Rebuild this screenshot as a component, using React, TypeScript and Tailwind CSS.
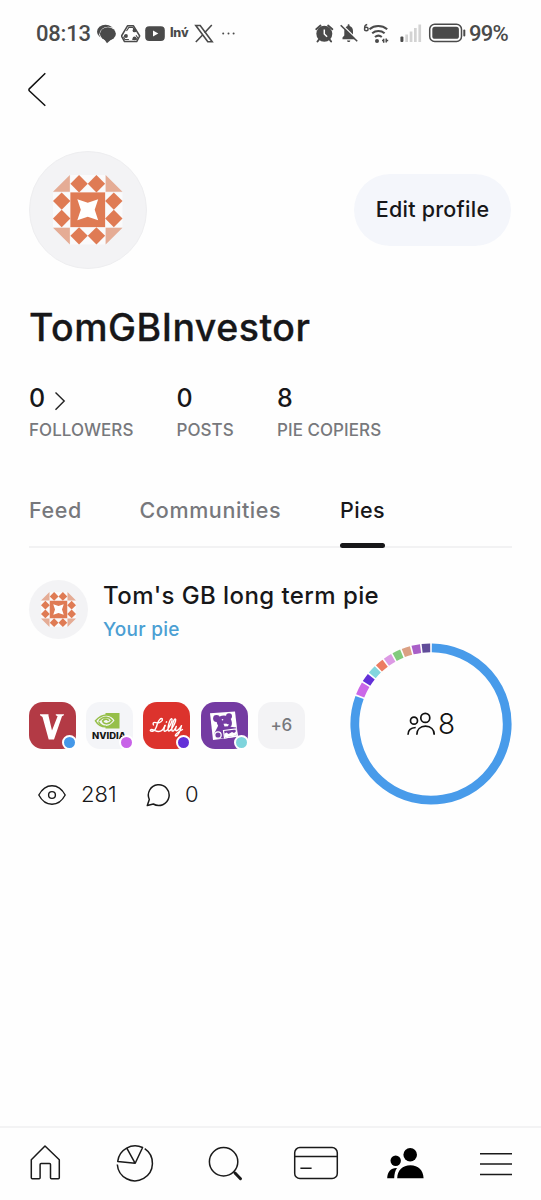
import React from "react";

const ORANGE = "#df7b54";
const PALE = "#e5ac95";

function Identicon({ className }: { className: string }) {
  const diamonds = [
    [1.5, 0.5], [2.5, 0.5], [0.5, 1.5], [0.5, 2.5],
    [3.5, 1.5], [3.5, 2.5], [1.5, 3.5], [2.5, 3.5],
  ];
  return (
    <svg viewBox="0 0 4 4" className={className}>
      <path d="M1 0h2v1h1v2h-1v1h-2v-1h-1v-2h1z" fill="#fafafb" />
      <path d="M0 .97L.97 0V.97zM3.03 0L4 .97H3.03zM0 3.03H.97V4zM3.03 3.03H4L3.03 4z" fill={PALE} />
      {diamonds.map(([x, y]) => (
        <path key={`${x}-${y}`} d={`M${x} ${y - 0.5}l.5 .5l-.5 .5l-.5 -.5z`} fill={ORANGE} />
      ))}
      <rect x="1" y="1" width="2" height="2" fill={ORANGE} />
      <path d="M1.4 1.4L2 1.6L2.6 1.4L2.4 2L2.6 2.6L2 2.4L1.4 2.6L1.6 2z" fill="#fff" />
    </svg>
  );
}

function StatusBar() {
  return (
    <div className="flex h-[66px] shrink-0 items-center pl-9 pr-[32px] font-[Roboto,sans-serif] text-[#4a4a4a]">
      <span className="w-[55px] pt-px text-[22px] font-medium leading-none tracking-[-0.2px]">08:13</span>
      <svg viewBox="97 23 20 21" className="ml-[6px] h-[21px] w-5">
        <ellipse cx="105.500" cy="31.800" rx="8.500" ry="7" fill="#4a4a4a" />
        <ellipse cx="108.300" cy="34.200" rx="9" ry="7.500" fill="#fff" />
        <ellipse cx="107.900" cy="33.800" rx="8" ry="6.600" fill="#4a4a4a" />
        <path d="M104 39l3 4.300 5.500-5z" fill="#4a4a4a" />
      </svg>
      <svg viewBox="121 23 20 21" className="ml-1 h-[21px] w-5">
        <path d="M127.500 25.800h6l6.200 10.200-3 5.600h-12.200l-3-5.600z" fill="none" stroke="#4a4a4a" strokeWidth="1.500" strokeLinejoin="round" />
        <path d="M126.500 31l2.400-3.600h4L135 31M125 35.200l-1.300 2.300 1.200 2h4M136 35.200l1.500 2.300-1.200 2h-4" fill="none" stroke="#4a4a4a" strokeWidth="1.100" />
        <circle cx="134.500" cy="30.400" r="1.900" fill="#4a4a4a" />
        <circle cx="126" cy="36" r="1.900" fill="#4a4a4a" />
        <circle cx="134.500" cy="38.300" r="1.900" fill="#4a4a4a" />
      </svg>
      <svg viewBox="145 23 20 21" className="ml-1 h-[21px] w-5">
        <rect x="145.200" y="26.200" width="19.600" height="14.800" rx="4" fill="#4a4a4a" />
        <path d="M153 30.600l5.300 3-5.300 3z" fill="#fff" />
      </svg>
      <span className="ml-[5px] w-[19px] whitespace-nowrap font-[Inter,sans-serif] text-[12.5px] font-extrabold leading-none tracking-[-0.2px]">Inv́</span>
      <svg viewBox="194 23 20 21" className="ml-[5px] h-[21px] w-5">
        <path d="M195.800 25.500h4.400l12 16.200h-4.400z" fill="none" stroke="#4a4a4a" strokeWidth="1.600" />
        <path d="M211.800 25l-7.200 7.700M202.800 34.800l-7 7.200" stroke="#4a4a4a" strokeWidth="1.600" />
      </svg>
      <svg viewBox="221 23 15 21" className="ml-[7px] h-[21px] w-[15px]" fill="#4a4a4a">
        <circle cx="223.200" cy="33.500" r="1" /><circle cx="228.500" cy="33.500" r="1" /><circle cx="233.600" cy="33.500" r="1" />
      </svg>
      <div className="flex-1" />
      <svg viewBox="314 23 20 21" className="h-[21px] w-5">
        <circle cx="324.300" cy="33.800" r="8" fill="#4a4a4a" />
        <path d="M316.200 29.200l4.300-3.700M332.400 29.200l-4.300-3.700" stroke="#4a4a4a" strokeWidth="1.800" strokeLinecap="round" />
        <path d="M319 39.500l-1.500 2M329.600 39.500l1.500 2" stroke="#4a4a4a" strokeWidth="2" strokeLinecap="round" />
        <path d="M324.300 29.500v4.500l2.800 2.800" fill="none" stroke="#fff" strokeWidth="1.500" />
      </svg>
      <svg viewBox="339 23 20 21" className="ml-[5px] h-[21px] w-5">
        <path d="M342.500 39.200v-1.600l1.800-2v-4.500c0-2.600 1.200-4.400 3.300-5v-.7c0-1.400 2-1.400 2 0v.7c2.200.6 3.400 2.400 3.400 5v4.500l1.800 2v1.600zM347 40.500h3.300c-.2 2-3 2-3.300 0z" fill="#4a4a4a" />
        <path d="M341.800 24.500l16.400 16" stroke="#fff" strokeWidth="1.400" />
        <path d="M340.700 25.300l16.500 16" stroke="#4a4a4a" strokeWidth="1.600" />
      </svg>
      <svg viewBox="363 21 27 23" className="ml-1 h-[23px] w-[27px]">
        <path d="M367.200 23.500c-2 .2-2.600 2-2.600 3.500" fill="none" stroke="#4a4a4a" strokeWidth="1.400" />
        <circle cx="366.300" cy="28" r="1.800" fill="none" stroke="#4a4a4a" strokeWidth="1.400" />
        <path d="M369.500 28.200c5-4.200 12.500-4.200 17.700 0M372.200 32.200c3.600-3 8.800-3 12.400 0M375 36c2-1.600 4.800-1.600 6.800 0" fill="none" stroke="#4a4a4a" strokeWidth="2.100" />
        <circle cx="377" cy="40" r="2" fill="#4a4a4a" />
        <path d="M383.700 37.800v4M386.200 37.400v4M382 39.600h1.700M386.200 39.600h2" stroke="#4a4a4a" strokeWidth="1.500" />
      </svg>
      <svg viewBox="400 23 22 21" className="ml-[10px] h-[21px] w-[22px]">
        <rect x="400.400" y="36.500" width="3" height="5.500" rx="1" fill="#4a4a4a" />
        <path d="M405.300 34.500h2.700v7.500h-2.700zM409.700 31.500h2.700v10.500h-2.700zM414 28h2.700v14h-2.700zM418.400 24.500h2.700v17.500h-2.700z" fill="#d3d3d3" />
      </svg>
      <svg viewBox="428 22 38 22" className="ml-[6px] h-[22px] w-[38px]">
        <rect x="429.700" y="24.200" width="31.800" height="17.200" rx="5" fill="none" stroke="#4a4a4a" strokeWidth="1.500" />
        <rect x="432.300" y="26.800" width="26.600" height="12" rx="2.600" fill="#4a4a4a" />
        <path d="M464.300 30.500v5" stroke="#4a4a4a" strokeWidth="2" strokeLinecap="round" />
      </svg>
      <span className="ml-[3px] w-10 whitespace-nowrap pt-px text-[22px] font-medium leading-none tracking-[-0.8px]">99%</span>
    </div>
  );
}

function Stat({ value, label, className, arrow }: { value: string; label: string; className: string; arrow?: boolean }) {
  return (
    <div className={className}>
      <div className="flex h-[30px] items-center text-[25px] font-medium leading-[30px] text-[#171719]">
        {value}
        {arrow && (
          <svg viewBox="0 0 12 20" className="ml-[9px] mt-[6px] h-5 w-3" fill="none" stroke="#222" strokeWidth="1.400">
            <path d="M1.500 1.500L10.200 10L1.500 18.800" />
          </svg>
        )}
      </div>
      <div className="mt-[7px] whitespace-nowrap text-[17px] font-medium leading-5 tracking-[0.05px] text-[#77787c]">{label}</div>
    </div>
  );
}

const slices = [
  { from: 0, to: 291, color: "#489bea" },
  { from: 291, to: 301.6, color: "#cb68e8" },
  { from: 301.6, to: 309, color: "#6330d8" },
  { from: 309, to: 316.3, color: "#82d5de" },
  { from: 316.3, to: 323.6, color: "#ec7c62" },
  { from: 323.6, to: 330.9, color: "#dc9ae4" },
  { from: 330.9, to: 338.1, color: "#82ca7d" },
  { from: 338.1, to: 345.4, color: "#dba083" },
  { from: 345.4, to: 352.7, color: "#a95fc8" },
  { from: 352.7, to: 360, color: "#604c99" },
];

function arc(from: number, to: number) {
  const r = 76.2;
  const point = (deg: number) => {
    const a = ((deg - 90) * Math.PI) / 180;
    return `${81 + r * Math.cos(a)} ${81 + r * Math.sin(a)}`;
  };
  return `M${point(from + 0.6)}A${r} ${r} 0 ${to - from > 180 ? 1 : 0} 1 ${point(to - 0.6)}`;
}

function PieRing() {
  return (
    <div className="grid size-[162px] shrink-0 place-items-center">
      <svg viewBox="0 0 162 162" className="col-start-1 row-start-1 size-[162px]" fill="none" strokeWidth="8.800">
        {slices.map((s) => (
          <path key={s.from} d={arc(s.from, s.to)} stroke={s.color} />
        ))}
      </svg>
      <div className="col-start-1 row-start-1 flex items-center gap-[3px]">
        <svg viewBox="0 0 28 24" className="h-6 w-7" fill="none" stroke="#111" strokeWidth="1.700">
          <circle cx="7" cy="8.700" r="3.500" />
          <circle cx="18.300" cy="5.900" r="4.500" />
          <path d="M1 22.700c0-4.500 3-7 7.700-7.200M9.800 22.700c0-5.200 3.500-8.500 8.700-8.500s8.700 3.300 8.700 8.500" />
        </svg>
        <span className="text-[28px] font-light leading-8 text-[#111]">8</span>
      </div>
    </div>
  );
}

function Tile({ bg, dot, children }: { bg: string; dot: string; children: React.ReactNode }) {
  return (
    <div className={`relative size-[47px] rounded-[14px] ${bg}`}>
      {children}
      <span className={`absolute -right-px -bottom-px size-[15px] rounded-full border-2 border-white ${dot}`} />
    </div>
  );
}

function Holdings() {
  return (
    <div className="flex gap-[10.2px]">
      <Tile bg="bg-[#b33a45]" dot="bg-[#4598e8]">
        <svg viewBox="0 0 47 47" className="size-full">
          <path d="M11 12.200H19.500L19.500 13.700L23 28.500L28.600 14.300L26.800 13.200V12.200H35L34.800 13.200L33 14.200L25 37.500H19.700L13.500 15L11 13.200Z" fill="#fff" />
        </svg>
      </Tile>
      <Tile bg="bg-[#f4f5f8]" dot="bg-[#c863e8]">
        <svg viewBox="0 0 47 47" className="size-full">
          <path d="M19.500 11H33.500V26.500H19.500z" fill="#96bf49" />
          <path d="M9.500 18.800c4-4.600 7.500-6 11.500-5.800 4 .3 7 3 8.500 5.500-2.500 3.600-5.500 6-9.500 6.200-5 .1-8.500-2.500-10.500-5.900z" fill="#f4f5f8" stroke="#96bf49" strokeWidth="1.500" />
          <path d="M13 18.800c2-2.300 4.500-3.800 7.500-3.500 3 .3 4.600 2 5.500 3.200-1.500 2-3.300 3.300-5.500 3.200-2 0-3.400-1.300-4-2.700 1.300-1.500 2.600-2.200 4.200-1.800 1 .3 1.700 1 2 1.600" fill="none" stroke="#96bf49" strokeWidth="1.600" />
          <path d="M12.500 19.500c1.500 3 4 4.800 7.500 4.800" fill="none" stroke="#96bf49" strokeWidth="1.400" />
          <text x="6" y="36.800" textLength="34" lengthAdjust="spacingAndGlyphs" fontFamily="Inter, sans-serif" fontSize="8.800" fontWeight="800" fill="#151515">NVIDIA</text>
        </svg>
      </Tile>
      <Tile bg="bg-[#dc332d]" dot="bg-[#6330d8]">
        <svg viewBox="0 0 47 47" className="size-full" fill="none" stroke="#fff" strokeWidth="1.400" strokeLinecap="round" strokeLinejoin="round">
          <path d="M10.500 23C9.200 20.500 11.500 19.800 13.800 20.800C16.500 21.500 20.300 18.700 19.300 16.800C17.800 15.500 15.300 18.500 14.300 22C13.300 26 12 28.800 9.500 29.300C7.500 29.500 6.600 28.300 8 27.600C10 27 12.500 29.500 15.500 29.500C18.500 29.500 20.500 27.500 22 23.500" />
          <path d="M22 23.500C20.800 26.500 20.500 29.300 21.800 29.300C23.500 29.300 25.800 26 27.300 23C28.800 20 29.800 17 28.600 16.600C26.800 17 24.300 26 25.300 28.700C26.200 30 28.700 27 30.700 23.500C32.200 20.500 33.500 17.500 32.200 17C30.500 17.500 28 26 29 28.700C30 30 32 27.500 33.300 24.500C32.300 27 32.200 28.700 33.500 28.700C35.200 28.500 37.200 26 38.500 23.700C37.500 28 35.200 33.500 33 34C31 33.700 33.500 30.800 39.500 27.500" />
          <path d="M23.300 20.200l.3-.4" />
        </svg>
      </Tile>
      <Tile bg="bg-[#743ba2]" dot="bg-[#7ed4dc]">
        <svg viewBox="0 0 47 47" className="size-full">
          <path d="M9 11.300L34 9.500L37 34.800L12 38Z" fill="#fff" />
          <g fill="#743ba2">
            <circle cx="15.500" cy="16.500" r="3.400" />
            <circle cx="28" cy="14.200" r="3" />
            <path d="M16 17C18 12.800 26 11.800 29.500 16.500C31.500 20 31.500 24 28.500 25.500C25 26.500 19 26.500 17 23.500C15.500 21 15.300 19 16 17Z" />
            <path d="M17.500 23L28 24.500L35.200 25.500L36 33.500L22 36.500L15 36L13.500 31Z" />
          </g>
          <path d="M22.500 21.700L28 21.500L27 24.300L23.500 24.500Z" fill="#fff" />
          <circle cx="27" cy="20.700" r="1.500" fill="#743ba2" />
          <circle cx="21.500" cy="17.700" r=".8" fill="#fff" />
          <circle cx="17" cy="33" r="3.200" fill="#743ba2" stroke="#fff" strokeWidth="1.200" />
          <path d="M22.500 28.500L35 26.800L36 33.800L23.500 36Z" fill="none" stroke="#fff" strokeWidth="1.200" />
          <path d="M23.500 35.500L23.300 31.800L25.500 30.500L27.500 32L31 30L33 31L35 29.500V33.500Z" fill="#fff" />
        </svg>
      </Tile>
      <div className="grid size-[47px] place-items-center rounded-[14px] bg-[#f3f3f5] text-[17px] font-medium leading-none tracking-[-0.2px] text-[#77787c]">+6</div>
    </div>
  );
}

function BottomNav() {
  const icons = [
    <path key="home" d="M24 7L38.300 20.800V38.800Q38.300 39.800 37.300 39.800H30.500Q29.500 39.800 29.500 38.800V25.500Q29.500 24.500 28.500 24.500H20.100Q19.100 24.500 19.100 25.500V38.800Q19.100 39.800 18.100 39.800H11.300Q10.300 39.800 10.300 38.800V20.800Z" strokeLinejoin="round" />,
    <g key="pie" strokeLinejoin="round">
      <path d="M24.200 24.300L6.700 22.400A17.600 17.600 0 0 1 31.600 8.500ZM24.200 24.300L15.800 9.200" />
      <path d="M33.700 9.600A17.600 17.600 0 1 1 6.300 25.500" />
    </g>,
    <g key="search">
      <circle cx="22.600" cy="22.700" r="14.200" />
      <path d="M32.800 32.800L34 34" />
      <path d="M34 34L39.500 39.700" strokeWidth="3" strokeLinecap="round" />
    </g>,
    <g key="card">
      <rect x="2.700" y="8.600" width="42.600" height="31" rx="5.200" />
      <path d="M2.700 17.400H45.300M8.400 29.300H19.600" />
    </g>,
    <g key="people" fill="#000" stroke="none">
      <circle cx="28.200" cy="15.700" r="6.800" />
      <circle cx="13.700" cy="21.700" r="5.200" />
      <path d="M15.200 39.200C15.600 31 20.500 26.200 28.400 26.200S41.200 31 41.600 39.200ZM5.200 39.200C5.400 32.500 9 28.600 15 28.900C13.200 31.500 12.300 35 12.200 39.200Z" />
    </g>,
    <path key="menu" d="M8 14.700H40M8 25.100H40M8 35.500H40" />,
  ];
  return (
    <nav className="mt-auto grid h-[74px] shrink-0 grid-cols-6 justify-items-center border-t-2 border-[#f3f3f4] pt-[11px]">
      {icons.map((icon, i) => (
        <svg key={i} viewBox="0 0 48 48" className="size-12" fill="none" stroke="#1a1a1a" strokeWidth="1.500">
          {icon}
        </svg>
      ))}
    </nav>
  );
}

export default function App() {
  return (
    <div className="flex h-[1200px] w-[541px] flex-col bg-[#fefefe] font-[Inter,sans-serif] text-[#171719]">
      <StatusBar />
      <div className="h-[85px] shrink-0 pl-[27px] pt-[6px]">
        <svg viewBox="0 0 20 36" className="h-9 w-5" fill="none" stroke="#111" strokeWidth="1.500">
          <path d="M18.300 1.300L2.500 16.600Q1.300 17.800 2.500 19L18.300 33.800" />
        </svg>
      </div>
      <div className="flex items-center justify-between pl-[29px] pr-[30px]">
        <div className="grid size-[118px] place-items-center rounded-full border border-[#eeeef0] bg-[#f3f3f5]">
          <Identicon className="size-[69.5px]" />
        </div>
        <button className="h-[72px] w-[157px] rounded-full bg-[#f4f6fb] text-[21.5px] font-medium leading-none tracking-[0.25px]">Edit profile</button>
      </div>
      <h1 className="ml-[29px] mt-[37px] whitespace-nowrap text-[37.500px] font-medium leading-[44px] tracking-[0.500px] [-webkit-text-stroke:0.300px_#171719]">
        TomGBInvestor
      </h1>
      <div className="mt-[33px] flex pl-[29px]">
        <Stat value="0" label="FOLLOWERS" arrow className="w-[147.5px]" />
        <Stat value="0" label="POSTS" className="w-[100.5px]" />
        <Stat value="8" label="PIE COPIERS" className="" />
      </div>
      <div className="mx-[29px] mt-[56px] flex h-[52px] border-b-2 border-[#f2f2f3] text-[21.5px] font-medium leading-[28px] tracking-[0.6px] text-[#77787c]">
        <span className="w-[110.500px]">Feed</span>
        <span className="w-[200.500px]">Communities</span>
        <span className="-mb-0.5 flex w-[45px] flex-col justify-between whitespace-nowrap tracking-[0.4px] text-[#171719]">
          <span>Pies</span>
          <span className="h-[5px] rounded-full bg-[#171719]" />
        </span>
      </div>
      <div className="mt-[32px] flex h-[60px] pl-[29px]">
        <div className="grid size-[59px] place-items-center rounded-full bg-[#f3f3f5]">
          <Identicon className="size-[35px]" />
        </div>
        <div className="ml-[15px] whitespace-nowrap">
          <div className="text-[24px] font-medium leading-[32px] tracking-[0.42px]">Tom's GB long term pie</div>
          <div className="mt-[6px] text-[19px] font-medium leading-6 tracking-[0.25px] text-[#4b9fd3]">Your pie</div>
        </div>
      </div>
      <div className="mt-[3px] flex justify-between pl-[29px] pr-[29px]">
        <div className="pt-[59px]">
          <Holdings />
          <div className="mt-[31px] flex h-7 items-center pl-[9px] text-[22px] font-light leading-7">
            <svg viewBox="0 0 28 22" className="mt-[2px] h-[22px] w-7" fill="none" stroke="#1a1a1a" strokeWidth="1.400">
              <path d="M.8 11C4 5 8.500 1.700 14 1.700S24 5 27.200 11C24 17 19.500 20.300 14 20.300S4 17 .8 11Z" strokeLinejoin="round" />
              <circle cx="14" cy="11" r="3.400" />
            </svg>
            <span className="ml-[15px] w-[37px]">281</span>
            <svg viewBox="0 0 24 24" className="ml-[28px] mt-[1px] size-6" fill="none" stroke="#1a1a1a" strokeWidth="1.500">
              <path d="M1.300 22.500L3.300 16.500A10.400 10.400 0 1 1 7.300 21Z" strokeLinejoin="round" />
            </svg>
            <span className="ml-[15px]">0</span>
          </div>
        </div>
        <PieRing />
      </div>
      <BottomNav />
    </div>
  );
}
